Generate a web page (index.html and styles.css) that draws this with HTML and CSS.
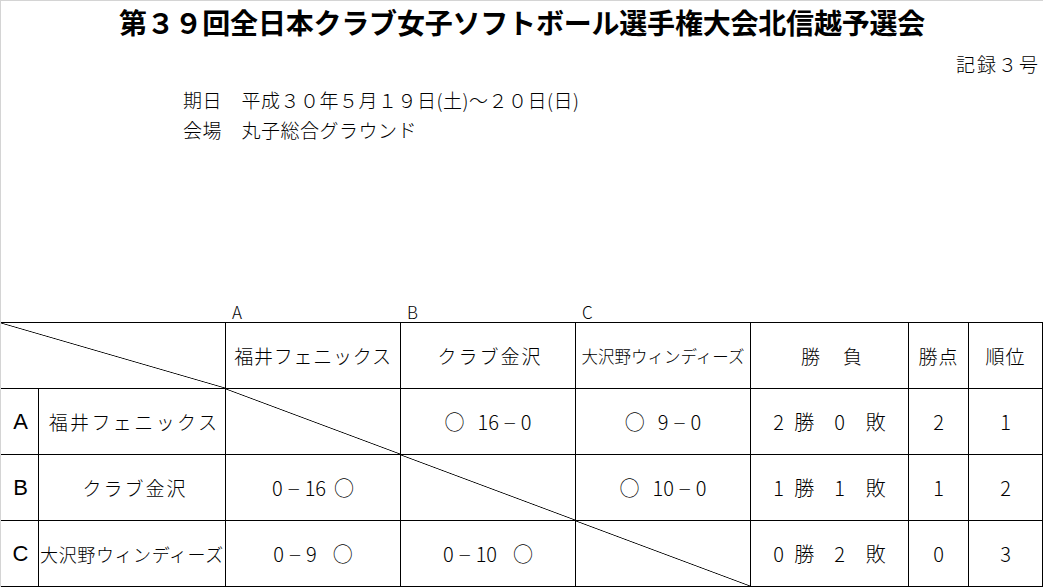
FILE: index.html
```html
<!DOCTYPE html>
<html lang="ja">
<head>
<meta charset="utf-8">
<title>第３９回全日本クラブ女子ソフトボール選手権大会北信越予選会</title>
<link rel="stylesheet" href="styles.css">
</head>
<body>
<div class="page">
  <h1 class="title">第３９回全日本クラブ女子ソフトボール選手権大会北信越予選会</h1>
  <div class="record">記録３号</div>
  <div class="meta">
    <div class="meta-line">期日　平成３０年５月１９日(土)～２０日(日)</div>
    <div class="meta-line">会場　丸子総合グラウンド</div>
  </div>

  <div class="letters">
    <span class="letter l-a">A</span>
    <span class="letter l-b">B</span>
    <span class="letter l-c">C</span>
  </div>

  <div class="board">
    <div class="cell corner diag"></div>
    <div class="cell h-team">福井フェニックス</div>
    <div class="cell h-team2">クラブ金沢</div>
    <div class="cell h-team3">大沢野ウィンディーズ</div>
    <div class="cell h-wl">勝　負</div>
    <div class="cell h-pt">勝点</div>
    <div class="cell h-pt">順位</div>

    <div class="cell key">A</div>
    <div class="cell name name-a">福井フェニックス</div>
    <div class="cell diag"></div>
    <div class="cell score"><span class="circ-l">○</span>16<span class="dash">－</span>0</div>
    <div class="cell score"><span class="circ-l">○</span>9<span class="dash">－</span>0</div>
    <div class="cell wl">2 勝　0&nbsp; 敗</div>
    <div class="cell num">2</div>
    <div class="cell num">1</div>

    <div class="cell key">B</div>
    <div class="cell name name-b">クラブ金沢</div>
    <div class="cell score">0<span class="dash">－</span>16<span class="circ-r">○</span></div>
    <div class="cell diag"></div>
    <div class="cell score"><span class="circ-l">○</span>10<span class="dash">－</span>0</div>
    <div class="cell wl">1 勝　1&nbsp; 敗</div>
    <div class="cell num">1</div>
    <div class="cell num">2</div>

    <div class="cell key">C</div>
    <div class="cell name name-c">大沢野ウィンディーズ</div>
    <div class="cell score">0<span class="dash">－</span>9<span class="circ-r wide">○</span></div>
    <div class="cell score">0<span class="dash">－</span>10<span class="circ-r wide">○</span></div>
    <div class="cell diag"></div>
    <div class="cell wl">0 勝　2&nbsp; 敗</div>
    <div class="cell num">0</div>
    <div class="cell num">3</div>
  </div>
</div>
</body>
</html>
```

FILE: styles.css
```css
* {
  box-sizing: border-box;
}

html, body {
  margin: 0;
  padding: 0;
  background: #fff;
}

body {
  font-family: "Noto Sans CJK JP", "Noto Sans", sans-serif;
  color: #000;
}

.page {
  width: 1043px;
  height: 587px;
  border-top: 1px solid #d4d4d4;
  border-left: 1px solid #d4d4d4;
  overflow: hidden;
}

.title {
  margin: 0;
  padding-top: 3px;
  font-size: 28px;
  line-height: 36px;
  font-weight: 700;
  text-align: center;
  letter-spacing: -0.2px;
}

.record {
  margin-top: 12px;
  font-size: 19px;
  line-height: 24px;
  font-weight: 300;
  letter-spacing: 2px;
  text-align: right;
  padding-right: 3px;
}

.meta {
  margin-top: 9px;
  padding-left: 182px;
  font-size: 19px;
  line-height: 30px;
  font-weight: 300;
  letter-spacing: 0.5px;
}

.letters {
  margin-top: 156px;
  height: 21px;
  display: grid;
  grid-template-columns: 37px 186px 174px 174px 174px 157px 59px 73px;
  column-gap: 1px;
  font-size: 17px;
  line-height: 21px;
  font-weight: 300;
}

.letter {
  padding-left: 6px;
}

.l-a { grid-column: 3; }
.l-b { grid-column: 4; }
.l-c { grid-column: 5; }

.board {
  display: grid;
  grid-template-columns: 37px 186px 174px 174px 174px 157px 59px 73px;
  grid-template-rows: repeat(4, 65px);
  gap: 1px;
  width: 1042px;
  background: #000;
  border-top: 1px solid #000;
  border-right: 1px solid #000;
  border-bottom: 1px solid #000;
}

.cell {
  background: #fff;
  display: flex;
  align-items: center;
  justify-content: center;
  font-size: 19px;
  font-weight: 300;
  white-space: nowrap;
  overflow: hidden;
}

.corner {
  grid-column: span 2;
}

.diag {
  background: linear-gradient(to top right, #fff calc(50% - 0.8px), #000 50%, #fff calc(50% + 0.8px));
}

.h-team {
  letter-spacing: 0.75px;
}

.h-team2 {
  letter-spacing: 2px;
  padding-left: 4px;
}

.h-team3 {
  font-size: 16.5px;
  letter-spacing: 0;
}

.h-wl {
  font-size: 19px;
  letter-spacing: 2px;
  padding-left: 6px;
}

.h-pt {
  font-size: 19px;
  letter-spacing: 1px;
}

.key {
  font-family: "Liberation Sans", Arial, sans-serif;
  font-size: 22px;
  font-weight: 400;
  padding-left: 2px;
}

.name-a {
  letter-spacing: 2.4px;
  padding-left: 4px;
}

.name-b {
  letter-spacing: 2px;
  padding-left: 6px;
}

.name-c {
  font-size: 18px;
  letter-spacing: 0.6px;
}

.score {
  font-size: 20px;
}

.dash {
  font-size: 14px;
  margin: 0 4px;
}

.circ-l {
  margin-right: 13px;
}

.circ-r {
  margin-left: 8px;
}

.circ-r.wide {
  margin-left: 16px;
}

.wl {
  font-size: 20px;
  word-spacing: 6px;
}

.num {
  font-size: 20px;
}
```
